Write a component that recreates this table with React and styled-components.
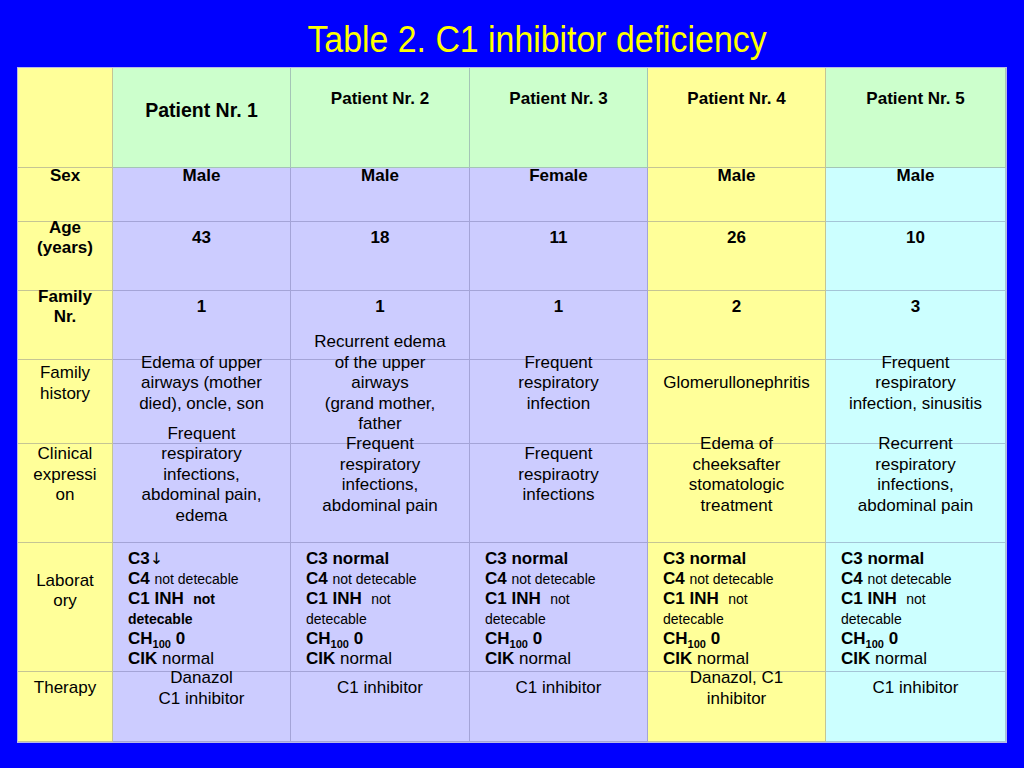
import React from 'react'
import styled, { createGlobalStyle } from 'styled-components'

const GlobalStyle = createGlobalStyle`
  html, body {
    margin: 0;
    padding: 0;
    background: #0000ff;
  }
  body {
    font-family: "Liberation Sans", Arial, sans-serif;
    color: #000;
  }
`

const YELLOW = '#ffff99'
const GREEN = '#ccffcc'
const LAVENDER = '#ccccff'
const CYAN = '#ccffff'

const Page = styled.div`
  width: 1024px;
  height: 768px;
  padding-top: 20px;
  box-sizing: border-box;
  overflow: hidden;
`

const Title = styled.h1`
  margin: 0 0 8px;
  padding-left: 50px;
  height: 40px;
  line-height: 40px;
  font-size: 37px;
  font-weight: normal;
  text-align: center;
  color: #ffff00;
  transform: scaleX(0.915);
  transform-origin: 537px 50%;
`

const Table = styled.div`
  margin-left: 18px;
  width: 988px;
  display: grid;
  grid-template-columns: 95px 178px 179px 178px 178px 180px;
  grid-template-rows: 100px 54px 69px 69px 84px 99px 129px 70px;
  outline: 1px solid #b8b8e8;
`

const Cell = styled.div`
  box-sizing: border-box;
  background: ${(p) => p.$bg};
  border-right: 1px solid rgba(90, 90, 140, 0.35);
  border-bottom: 1px solid rgba(90, 90, 140, 0.35);
  display: flex;
  flex-direction: column;
  justify-content: center;
  align-items: center;
  padding: 0 2px ${(p) => p.$lift ?? 36}px;
  font-size: ${(p) => p.$size ?? 17}px;
  font-weight: ${(p) => (p.$bold ? 'bold' : 'normal')};
  line-height: 20.5px;
  text-align: center;
  white-space: nowrap;
  min-width: 0;
  min-height: 0;
`

const Text = styled.span`
  position: relative;
  z-index: 1;
`

const LabCell = styled.div`
  box-sizing: border-box;
  background: ${(p) => p.$bg};
  border-right: 1px solid rgba(90, 90, 140, 0.35);
  border-bottom: 1px solid rgba(90, 90, 140, 0.35);
  padding: 6px 0 0 15px;
  overflow: hidden;
  white-space: nowrap;
`

const Line = styled.div`
  height: 20px;
  line-height: 20px;
  font-size: 17px;
`

const Bold = styled.b`
  font-weight: bold;
`

const Arrow = styled.span`
  font-family: "DejaVu Sans", sans-serif;
  font-weight: normal;
  font-size: 16px;
  color: #000;
`

const Small = styled.span`
  font-size: 14px;
  font-weight: ${(p) => (p.$bold ? 'bold' : 'normal')};
`

const Sub = styled.sub`
  font-size: 11px;
  line-height: 0;
  vertical-align: -4px;
`

const patients = [
  { name: 'Patient Nr. 1', big: true, head: GREEN, body: LAVENDER, sex: 'Male', age: '43', fam: '1',
    history: ['Edema of upper', 'airways (mother', 'died), oncle, son'],
    clinical: ['Frequent', 'respiratory', 'infections,', 'abdominal pain,', 'edema'],
    c3: 'down', boldNot: true, therapy: ['Danazol', 'C1 inhibitor'] },
  { name: 'Patient Nr. 2', head: GREEN, body: LAVENDER, sex: 'Male', age: '18', fam: '1',
    history: ['Recurrent edema', 'of the upper', 'airways', '(grand mother,', 'father'],
    clinical: ['Frequent', 'respiratory', 'infections,', 'abdominal pain'],
    therapy: ['C1 inhibitor'] },
  { name: 'Patient Nr. 3', head: GREEN, body: LAVENDER, sex: 'Female', age: '11', fam: '1',
    history: ['Frequent', 'respiratory', 'infection'],
    clinical: ['Frequent', 'respiraotry', 'infections'],
    therapy: ['C1 inhibitor'] },
  { name: 'Patient Nr. 4', head: YELLOW, body: YELLOW, sex: 'Male', age: '26', fam: '2',
    history: ['Glomerullonephritis'],
    clinical: ['Edema of', 'cheeksafter', 'stomatologic', 'treatment'],
    therapy: ['Danazol, C1', 'inhibitor'] },
  { name: 'Patient Nr. 5', head: GREEN, body: CYAN, sex: 'Male', age: '10', fam: '3',
    history: ['Frequent', 'respiratory', 'infection, sinusitis'],
    clinical: ['Recurrent', 'respiratory', 'infections,', 'abdominal pain'],
    therapy: ['C1 inhibitor'] },
]

const Lines = ({ items }) => (
  <Text>
    {items.map((t, i) => (
      <React.Fragment key={i}>
        {i > 0 && <br />}
        {t}
      </React.Fragment>
    ))}
  </Text>
)

const Laboratory = ({ p }) => (
  <LabCell $bg={p.body}>
    <Line>
      {p.c3 === 'down' ? (
        <Bold>
          C3<Arrow>{'\u2193'}</Arrow>
        </Bold>
      ) : (
        <Bold>C3 normal</Bold>
      )}
    </Line>
    <Line>
      <Bold>C4</Bold> <Small>not detecable</Small>
    </Line>
    <Line>
      <Bold>C1 INH</Bold>&nbsp; <Small $bold={p.boldNot}>not</Small>
    </Line>
    <Line>
      <Small $bold={p.boldNot}>detecable</Small>
    </Line>
    <Line>
      <Bold>
        CH<Sub>100</Sub> 0
      </Bold>
    </Line>
    <Line>
      <Bold>CIK</Bold> normal
    </Line>
    <Line>
      <Bold>Inh. </Bold>
      <Arrow>{'\u2191\u2191'}</Arrow>
    </Line>
  </LabCell>
)

const App = () => {
  return (
    <>
      <GlobalStyle />
      <Page>
        <Title>Table 2. C1 inhibitor deficiency</Title>
        <Table>
          <Cell $bg={YELLOW} />
          {patients.map((p) => (
            <Cell key={p.name} $bg={p.head} $bold $size={p.big ? 19.5 : 17} $lift={p.big ? 14 : 36}>
              <Text>{p.name}</Text>
            </Cell>
          ))}

          <Cell $bg={YELLOW} $bold>
            <Text>Sex</Text>
          </Cell>
          {patients.map((p) => (
            <Cell key={p.name} $bg={p.body} $bold>
              <Text>{p.sex}</Text>
            </Cell>
          ))}

          <Cell $bg={YELLOW} $bold>
            <Lines items={['Age', '(years)']} />
          </Cell>
          {patients.map((p) => (
            <Cell key={p.name} $bg={p.body} $bold>
              <Text>{p.age}</Text>
            </Cell>
          ))}

          <Cell $bg={YELLOW} $bold>
            <Lines items={['Family', 'Nr.']} />
          </Cell>
          {patients.map((p) => (
            <Cell key={p.name} $bg={p.body} $bold>
              <Text>{p.fam}</Text>
            </Cell>
          ))}

          <Cell $bg={YELLOW}>
            <Lines items={['Family', 'history']} />
          </Cell>
          {patients.map((p) => (
            <Cell key={p.name} $bg={p.body}>
              <Lines items={p.history} />
            </Cell>
          ))}

          <Cell $bg={YELLOW}>
            <Lines items={['Clinical', 'expressi', 'on']} />
          </Cell>
          {patients.map((p) => (
            <Cell key={p.name} $bg={p.body}>
              <Lines items={p.clinical} />
            </Cell>
          ))}

          <Cell $bg={YELLOW} $lift={32}>
            <Lines items={['Laborat', 'ory']} />
          </Cell>
          {patients.map((p) => (
            <Laboratory key={p.name} p={p} />
          ))}

          <Cell $bg={YELLOW}>
            <Text>Therapy</Text>
          </Cell>
          {patients.map((p) => (
            <Cell key={p.name} $bg={p.body}>
              <Lines items={p.therapy} />
            </Cell>
          ))}
        </Table>
      </Page>
    </>
  )
}

export default App
